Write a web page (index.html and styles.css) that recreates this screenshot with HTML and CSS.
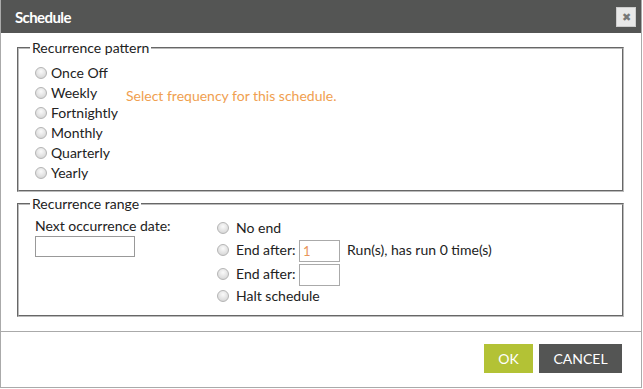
FILE: index.html
```
<!DOCTYPE html>
<html lang="en">
<head>
    <meta charset="UTF-8">
    <title>Schedule</title>
    <link rel="stylesheet" href="styles.css">
</head>
<body>
    <div class="dialog">
        <div class="dialog-header">
            <span class="dialog-title">Schedule</span>
            <button class="close-btn" type="button">&#x2716;</button>
        </div>
        <div class="dialog-body">
            <fieldset class="pattern">
                <legend>Recurrence pattern</legend>
                <div class="pattern-grid">
                    <div class="options">
                        <label class="radio-row"><input type="radio" name="freq">Once Off</label>
                        <label class="radio-row"><input type="radio" name="freq">Weekly</label>
                        <label class="radio-row"><input type="radio" name="freq">Fortnightly</label>
                        <label class="radio-row"><input type="radio" name="freq">Monthly</label>
                        <label class="radio-row"><input type="radio" name="freq">Quarterly</label>
                        <label class="radio-row"><input type="radio" name="freq">Yearly</label>
                    </div>
                    <div class="hint">Select frequency for this schedule.</div>
                </div>
            </fieldset>

            <fieldset class="range">
                <legend>Recurrence range</legend>
                <div class="range-grid">
                    <div class="next-date">
                        <label for="next_date">Next occurrence date:</label>
                        <input type="text" id="next_date" class="date-input">
                    </div>
                    <div class="end-options">
                        <label class="radio-row"><input type="radio" name="end">No end</label>
                        <div class="radio-row tall"><input type="radio" name="end">End after: <input type="text" class="small-input" value="1">Run(s), has run 0 time(s)</div>
                        <div class="radio-row tall"><input type="radio" name="end">End after: <input type="text" class="small-input"></div>
                        <label class="radio-row"><input type="radio" name="end">Halt schedule</label>
                    </div>
                </div>
            </fieldset>
        </div>
        <div class="dialog-footer">
            <button class="btn btn-ok" type="button">OK</button>
            <button class="btn btn-cancel" type="button">CANCEL</button>
        </div>
    </div>
</body>
</html>
```

FILE: styles.css
```
body {
    margin: 0;
    background: #ffffff;
    font-family: 'Lato', 'Open Sans', sans-serif;
    font-size: 14px;
    color: #222;
}
.dialog {
    width: 640px;
    height: 387px;
    border: 1px solid #aaa;
    border-top: none;
    background: #fff;
    display: flex;
    flex-direction: column;
}
.dialog-header {
    height: 33px;
    background: #545554;
    display: flex;
    align-items: center;
    justify-content: space-between;
    padding: 0 5px 0 14px;
}
.dialog-title {
    color: #fff;
    font-weight: bold;
    font-size: 15px;
    letter-spacing: -0.6px;
}
.close-btn {
    width: 20px;
    height: 20px;
    padding: 0;
    border: 1px solid #ccc;
    background: #e8e8e8;
    color: #777;
    font-size: 11px;
    line-height: 18px;
    cursor: pointer;
}
.dialog-body {
    flex: 1;
    padding: 6px 17px 0 16px;
    border-bottom: 1px solid #aaa;
}
fieldset {
    margin: 0;
    border: 2px groove #bbb;
    padding: 7px 12px 7px 11px;
}
legend {
    padding: 0 2px;
    line-height: 17px;
    color: #222;
}
.pattern-grid {
    display: flex;
}
.options {
    width: 96px;
}
.radio-row {
    display: block;
    height: 20px;
    line-height: 20px;
    white-space: nowrap;
}
.radio-row.tall {
    height: 24px;
    line-height: 24px;
}
input[type="radio"] {
    appearance: none;
    width: 12px;
    height: 12px;
    margin: 0 4px 0 5px;
    vertical-align: -1px;
    border: 1px solid #b5b5b5;
    border-radius: 50%;
    background: radial-gradient(circle at 50% 35%, #fafafa 0%, #dcdcdc 70%, #c8c8c8 100%);
    box-sizing: border-box;
}
.hint {
    color: #f0a050;
    margin-top: 23px;
    line-height: 20px;
}
.range {
    margin-top: 3px;
    padding-top: 6px;
    padding-bottom: 9px;
}
.range-grid {
    display: flex;
}
.next-date {
    width: 177px;
    margin-top: -2px;
    padding-left: 5px;
}
.next-date label {
    display: block;
    line-height: 20px;
}
.date-input {
    display: block;
    width: 100px;
    height: 21px;
    border: 1px solid #999;
    box-sizing: border-box;
    margin: 0;
}
.end-options input[type="radio"] {
    margin-right: 7px;
}
.small-input {
    width: 41px;
    height: 22px;
    margin: 0 7px 0 0;
    vertical-align: middle;
    border: 1px solid #aaa;
    box-sizing: border-box;
    color: #e8955a;
    font-family: inherit;
    font-size: 13px;
    padding: 0 3px;
}
.dialog-footer {
    height: 55px;
    display: flex;
    justify-content: flex-end;
    align-items: flex-start;
    gap: 6px;
    padding: 12px 19px 0 0;
    box-sizing: border-box;
}
.btn {
    height: 29px;
    border: none;
    color: #fff;
    font-family: inherit;
    font-size: 14px;
    cursor: pointer;
}
.btn-ok {
    width: 49px;
    background: #b3c235;
}
.btn-cancel {
    width: 83px;
    background: #545554;
}
```
